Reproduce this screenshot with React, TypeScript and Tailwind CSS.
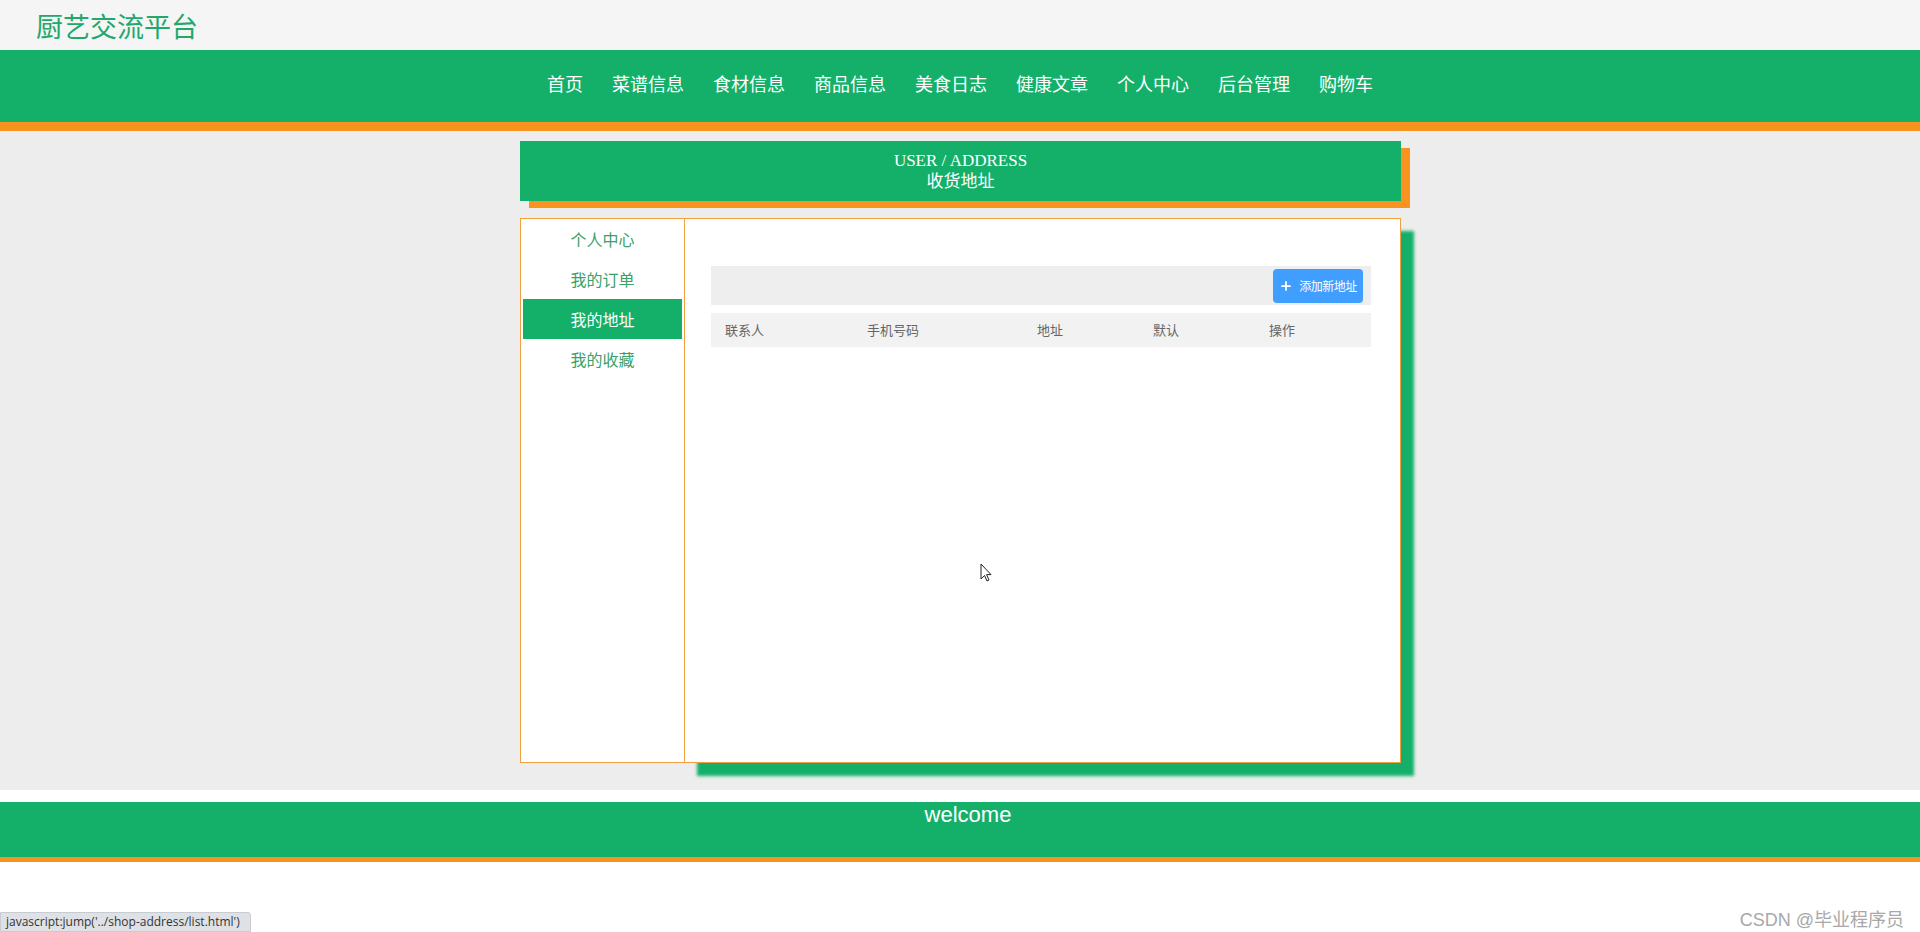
import { Plus } from "lucide-react";

const NAV = ["首页", "菜谱信息", "食材信息", "商品信息", "美食日志", "健康文章", "个人中心", "后台管理", "购物车"];
const SIDE = ["个人中心", "我的订单", "我的地址", "我的收藏"];
const COLS = [
  { label: "联系人", w: "w-[142px]" },
  { label: "手机号码", w: "w-[170px]" },
  { label: "地址", w: "w-[116px]" },
  { label: "默认", w: "w-[116px]" },
  { label: "操作", w: "flex-1" },
];

const cjk = "font-['Microsoft_YaHei','Noto_Sans_CJK_SC',sans-serif]";

export default function App() {
  return (
    <div className={`relative min-h-[932px] bg-white ${cjk}`}>
      {/* top title bar */}
      <header className="flex h-[50px] items-center bg-[#f5f5f5] pl-[36px]">
        <span className="text-[27px] leading-none text-[#22a86b]">厨艺交流平台</span>
      </header>

      {/* main nav */}
      <nav className="flex h-[81px] items-center justify-center gap-[29px] border-b-[9px] border-[#f8931f] bg-[#14b06a] pb-[2px]">
        {NAV.map((item) => (
          <a
            key={item}
            className="font-['Liberation_Serif','Noto_Sans_CJK_SC',serif] text-[18px] leading-none text-white"
          >
            {item}
          </a>
        ))}
      </nav>

      {/* content area */}
      <main className="bg-[#ededed] pb-[27px] pt-[10px]">
        <div className="mx-auto w-[882px] pl-[1px]">
          {/* page banner */}
          <div className="flex h-[60px] flex-col items-center justify-center bg-[#14b06a] pt-[1px] text-white shadow-[9px_7px_0_#f8931f]">
            <span className="font-['Liberation_Serif',serif] text-[17px] leading-[20px]">USER / ADDRESS</span>
            <span className="font-['Liberation_Serif','Noto_Sans_CJK_SC',serif] text-[17px] leading-[21px]">收货地址</span>
          </div>

          <div className="mt-[17px] flex h-[545px]">
            {/* sidebar */}
            <aside className="w-[164px] border-y border-l border-[#f0a040] bg-white px-[2px]">
              {SIDE.map((item) => (
                <div
                  key={item}
                  className={
                    item === "我的地址"
                      ? "flex h-10 items-center justify-center bg-[#14b06a] text-[16px] text-white"
                      : "flex h-10 items-center justify-center text-[16px] text-[#3aa168]"
                  }
                >
                  {item}
                </div>
              ))}
            </aside>

            {/* address panel */}
            <section className="flex-1 border border-[#f0a040] bg-white pl-[26px] pr-[29px] pt-[47px] shadow-[13px_13px_3px_#14b06a]">
              <div className="flex h-[39px] items-center justify-end bg-[#eeeeee] pr-[8px]">
                <button className="flex h-[34px] w-[90px] items-center justify-center gap-[6px] rounded-[4px] bg-[#409eff] text-[12px] text-white">
                  <Plus size={14} strokeWidth={3} />
                  <span className="tracking-[-0.5px]">添加新地址</span>
                </button>
              </div>
              <div className="mt-[8px] flex h-[34px] items-center bg-[#f2f2f2] text-[13px] text-[#666666]">
                {COLS.map((c) => (
                  <div key={c.label} className={`${c.w} pl-[14px]`}>
                    {c.label}
                  </div>
                ))}
              </div>
            </section>
          </div>
        </div>
      </main>

      {/* footer */}
      <footer className="mt-[12px] h-[60px] border-b-[5px] border-[#f8931f] bg-[#14b06a] pl-[16px] text-center">
        <span className="font-['Liberation_Sans',Arial,sans-serif] text-[22px] leading-[26px] text-white">welcome</span>
      </footer>

      {/* mouse cursor */}
      <svg className="absolute left-[980px] top-[563px]" width="12" height="19" viewBox="0 0 12 19">
        <path d="M1 1 L1 16 L4.5 12.5 L7 18 L9 17 L6.6 11.6 L11 11.6 Z" fill="white" stroke="#222" strokeWidth="1" strokeLinejoin="round" />
      </svg>

      {/* browser status bar */}
      <div className="absolute bottom-0 left-0 flex h-[20px] w-[251px] items-center rounded-tr-[3px] border border-[#c8cbd0] bg-[#dee1e6] pl-[5px] font-['Open_Sans',sans-serif] text-[12px] text-[#333333]">
        javascript:jump('../shop-address/list.html')
      </div>

      {/* watermark */}
      <div className="absolute bottom-[2px] right-[16px] font-['Liberation_Sans','Noto_Sans_CJK_SC',sans-serif] text-[18px] leading-[20px] text-[#a8a8a8]">
        CSDN @毕业程序员
      </div>
    </div>
  );
}
